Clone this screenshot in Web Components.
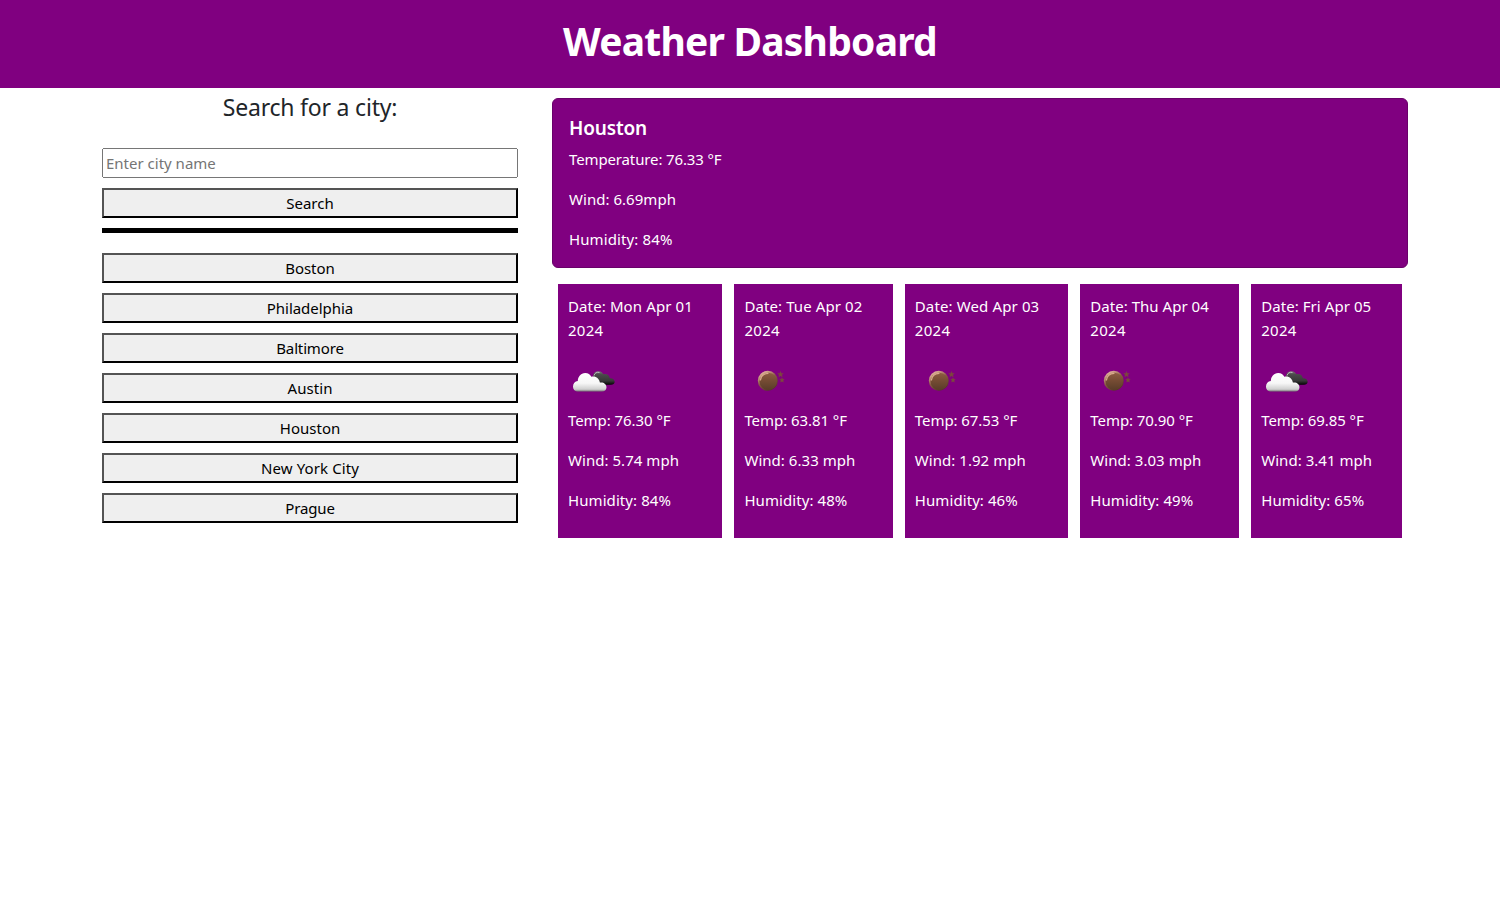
<!DOCTYPE html>
<html lang="en">
<head>
<meta charset="utf-8">
<title>Weather Dashboard</title>
<style>
body { margin: 0; background: #fff; color: #212529; font: 15px/24px "Noto Sans", "Open Sans", sans-serif; }
</style>
</head>
<body>
<weather-app></weather-app>
<script>
const make = (host, html) => { host.attachShadow({ mode: "open" }).innerHTML = html; };

// One line of text, tracked to an exact measure given by the "w" attribute.
customElements.define("text-line", class extends HTMLElement {
  connectedCallback() {
    if (this.shadowRoot) return;
    make(this, `<style>:host{display:block;white-space:nowrap}span{display:inline-block}</style><span><slot></slot></span>`);
    const span = this.shadowRoot.querySelector("span");
    const w = parseFloat(this.getAttribute("w"));
    const n = this.textContent.length;
    if (w && n > 1) {
      const s = (w - span.getBoundingClientRect().width) / n;
      span.style.letterSpacing = s.toFixed(3) + "px";
    }
  }
});

customElements.define("page-header", class extends HTMLElement {
  connectedCallback() {
    make(this, `<style>
      :host{display:flex;justify-content:center;box-sizing:border-box;height:88px;padding-top:17px;background:#800080;color:#fff}
      h1{margin:0;font-size:39px;line-height:48px;font-weight:700}
    </style><h1><text-line w="374">Weather Dashboard</text-line></h1>`);
  }
});

customElements.define("city-button", class extends HTMLElement {
  connectedCallback() {
    make(this, `<style>
      :host{display:block}
      button{display:flex;justify-content:center;align-items:center;box-sizing:border-box;width:100%;height:30px;margin:0;padding:0;
        background:#efefef;color:#000;border:2px outset #000;border-radius:0;font:inherit}
    </style><button><text-line w="${this.getAttribute("w")}">${this.getAttribute("label")}</text-line></button>`);
  }
});

const CITIES = [["Boston", 49.5], ["Philadelphia", 86.5], ["Baltimore", 67.5], ["Austin", 45], ["Houston", 60.5], ["New York City", 98], ["Prague", 49.5]];

customElements.define("search-panel", class extends HTMLElement {
  connectedCallback() {
    make(this, `<style>
      :host{display:flex;flex-direction:column;width:416px;padding-top:5px}
      h4{margin:0 0 26px;font-size:23px;line-height:29px;font-weight:400;display:flex;justify-content:center}
      input{box-sizing:border-box;width:100%;height:30px;margin:0 0 10px;padding:1px 2px;font:inherit;letter-spacing:0}
      hr{width:100%;height:5px;margin:10px 0 20px;border:0;background:#000}
      .list{display:flex;flex-direction:column;gap:10px}
    </style>
    <h4><text-line w="174.5">Search for a city:</text-line></h4>
    <input type="text" placeholder="Enter city name">
    <city-button label="Search" w="47.5"></city-button>
    <hr>
    <div class="list">${CITIES.map(([c, w]) => `<city-button label="${c}" w="${w}"></city-button>`).join("")}</div>`);
  }
});

customElements.define("current-weather", class extends HTMLElement {
  connectedCallback() {
    make(this, `<style>
      :host{display:flex;flex-direction:column;gap:16px;box-sizing:border-box;height:170px;padding:16px;background:#800080;color:#fff;
        border:1px solid #6a006a;border-radius:6px}
      h5{margin:0 0 -8px;padding-top:2px;font-size:19px;line-height:22px;font-weight:600}
      h5 text-line{line-height:23px;margin-bottom:-1px}
    </style>
    <h5><text-line w="78">Houston</text-line></h5>
    <text-line w="152.5">Temperature: 76.33 °F</text-line>
    <text-line w="107">Wind: 6.69mph</text-line>
    <text-line w="103.5">Humidity: 84%</text-line>`);
  }
});

const CLOUD = `<defs>
  <linearGradient id="w" x1="0" y1="0" x2="0" y2="1"><stop offset="0" stop-color="#fff"/><stop offset=".55" stop-color="#f7f7f7"/><stop offset=".88" stop-color="#cfcfcf"/><stop offset="1" stop-color="#777"/></linearGradient>
  <linearGradient id="k" x1="0" y1="0" x2="0" y2="1"><stop offset="0" stop-color="#777"/><stop offset=".25" stop-color="#4a4a4a"/><stop offset=".7" stop-color="#383838"/><stop offset="1" stop-color="#000"/></linearGradient></defs>
  <path fill="url(#k)" d="M26 27 L25 17.500 C25.500 14.500 28 13 30.500 13.200 C33 13.300 34.600 14.600 35.300 16.300 C38.200 15.500 41.500 17 41.800 20.300 C44.500 20 46.700 21.800 46.700 23.700 C46.700 25.700 45 26.700 43 26.700Z"/>
  <path d="M26 17.500C26.500 15 29 13.800 31.500 14.500" fill="none" stroke="#bbb" stroke-width="1"/>
  <path fill="url(#w)" d="M10 33.500 C6.700 33.500 5 31.300 5 28.500 C5 25.600 7 23.400 9.800 23.100 C9.800 18.800 12.800 15 17.200 15 C20.200 15 22.200 16.600 23.300 18.800 C27 17.300 31.500 20.300 31.900 24.600 C35.300 23.800 38.500 26.100 38.500 29.300 C38.500 32.100 36.500 33.500 34 33.500Z"/>`;
const MOON = `<defs>
  <linearGradient id="m" x1="0" y1="0" x2="0" y2="1"><stop offset="0" stop-color="#8e5d42"/><stop offset=".45" stop-color="#764c34"/><stop offset="1" stop-color="#593c28"/></linearGradient>
  <linearGradient id="r" x1=".2" y1="0" x2=".8" y2="1"><stop offset="0" stop-color="#f0c4aa"/><stop offset=".45" stop-color="#8b5b45"/><stop offset="1" stop-color="#4a2c22"/></linearGradient></defs>
  <circle cx="23.800" cy="22.800" r="10" fill="url(#r)"/>
  <circle cx="24.300" cy="23.400" r="8.700" fill="url(#m)"/>
  <path d="M16.500 22C17 18 20 15.500 24 15.300" fill="none" stroke="#d9ab8c" stroke-width="1.200" stroke-linecap="round"/>
  <path fill="#7b4a3c" stroke="#7b4a3c" stroke-width=".4" d="M36.500 13.500l.7 1.900 2.100.1-1.600 1.300.5 2-1.700-1.100-1.700 1.100.5-2-1.600-1.300 2.100-.1zM38 19.800l.6 1.500 1.700.1-1.300 1.100.4 1.700-1.400-1-1.400 1 .4-1.700-1.300-1.100 1.700-.1z"/>`;

customElements.define("weather-icon", class extends HTMLElement {
  connectedCallback() {
    make(this, `<style>:host{display:block;height:50px}svg{display:block}</style>
    <svg width="50" height="50" viewBox="0 0 50 50">${this.getAttribute("kind") === "cloud" ? CLOUD : MOON}</svg>`);
  }
});

customElements.define("forecast-card", class extends HTMLElement {
  connectedCallback() {
    const [date, dw, kind, temp, wind, hum] = this.data;
    make(this, `<style>
      :host{display:block;box-sizing:border-box;height:254px;padding:10px;background:#800080;color:#fff;min-width:0}
      .date{margin-bottom:16px}
      .stats{display:flex;flex-direction:column;gap:16px}
    </style>
    <div class="date"><text-line w="${dw}">${date}</text-line><text-line w="35.5">2024</text-line></div>
    <weather-icon kind="${kind}"></weather-icon>
    <div class="stats"><text-line w="102.5">Temp: ${temp} °F</text-line><text-line w="111">Wind: ${wind} mph</text-line><text-line w="103">Humidity: ${hum}%</text-line></div>`);
  }
});

const DAYS = [
  ["Date: Mon Apr 01", 125, "cloud", "76.30", "5.74", 84],
  ["Date: Tue Apr 02", 118, "moon", "63.81", "6.33", 48],
  ["Date: Wed Apr 03", 124.5, "moon", "67.53", "1.92", 46],
  ["Date: Thu Apr 04", 118.5, "moon", "70.90", "3.03", 49],
  ["Date: Fri Apr 05", 110, "cloud", "69.85", "3.41", 65]
];

customElements.define("forecast-row", class extends HTMLElement {
  connectedCallback() {
    make(this, `<style>:host{display:grid;grid-template-columns:164.4fr 158.400fr 163.500fr 158.900fr 150.800fr;gap:12px;margin:16px 6px 0}</style>`);
    for (const d of DAYS) {
      const card = document.createElement("forecast-card");
      card.data = d;
      this.shadowRoot.append(card);
    }
  }
});

customElements.define("weather-app", class extends HTMLElement {
  connectedCallback() {
    make(this, `<style>
      :host{display:block}
      main{display:flex;gap:34px;padding:0 92px 0 102px}
      .results{flex:1;min-width:0;padding-top:10px}
    </style>
    <page-header></page-header>
    <main><search-panel></search-panel><div class="results"><current-weather></current-weather><forecast-row></forecast-row></div></main>`);
  }
});
</script>
</body>
</html>
